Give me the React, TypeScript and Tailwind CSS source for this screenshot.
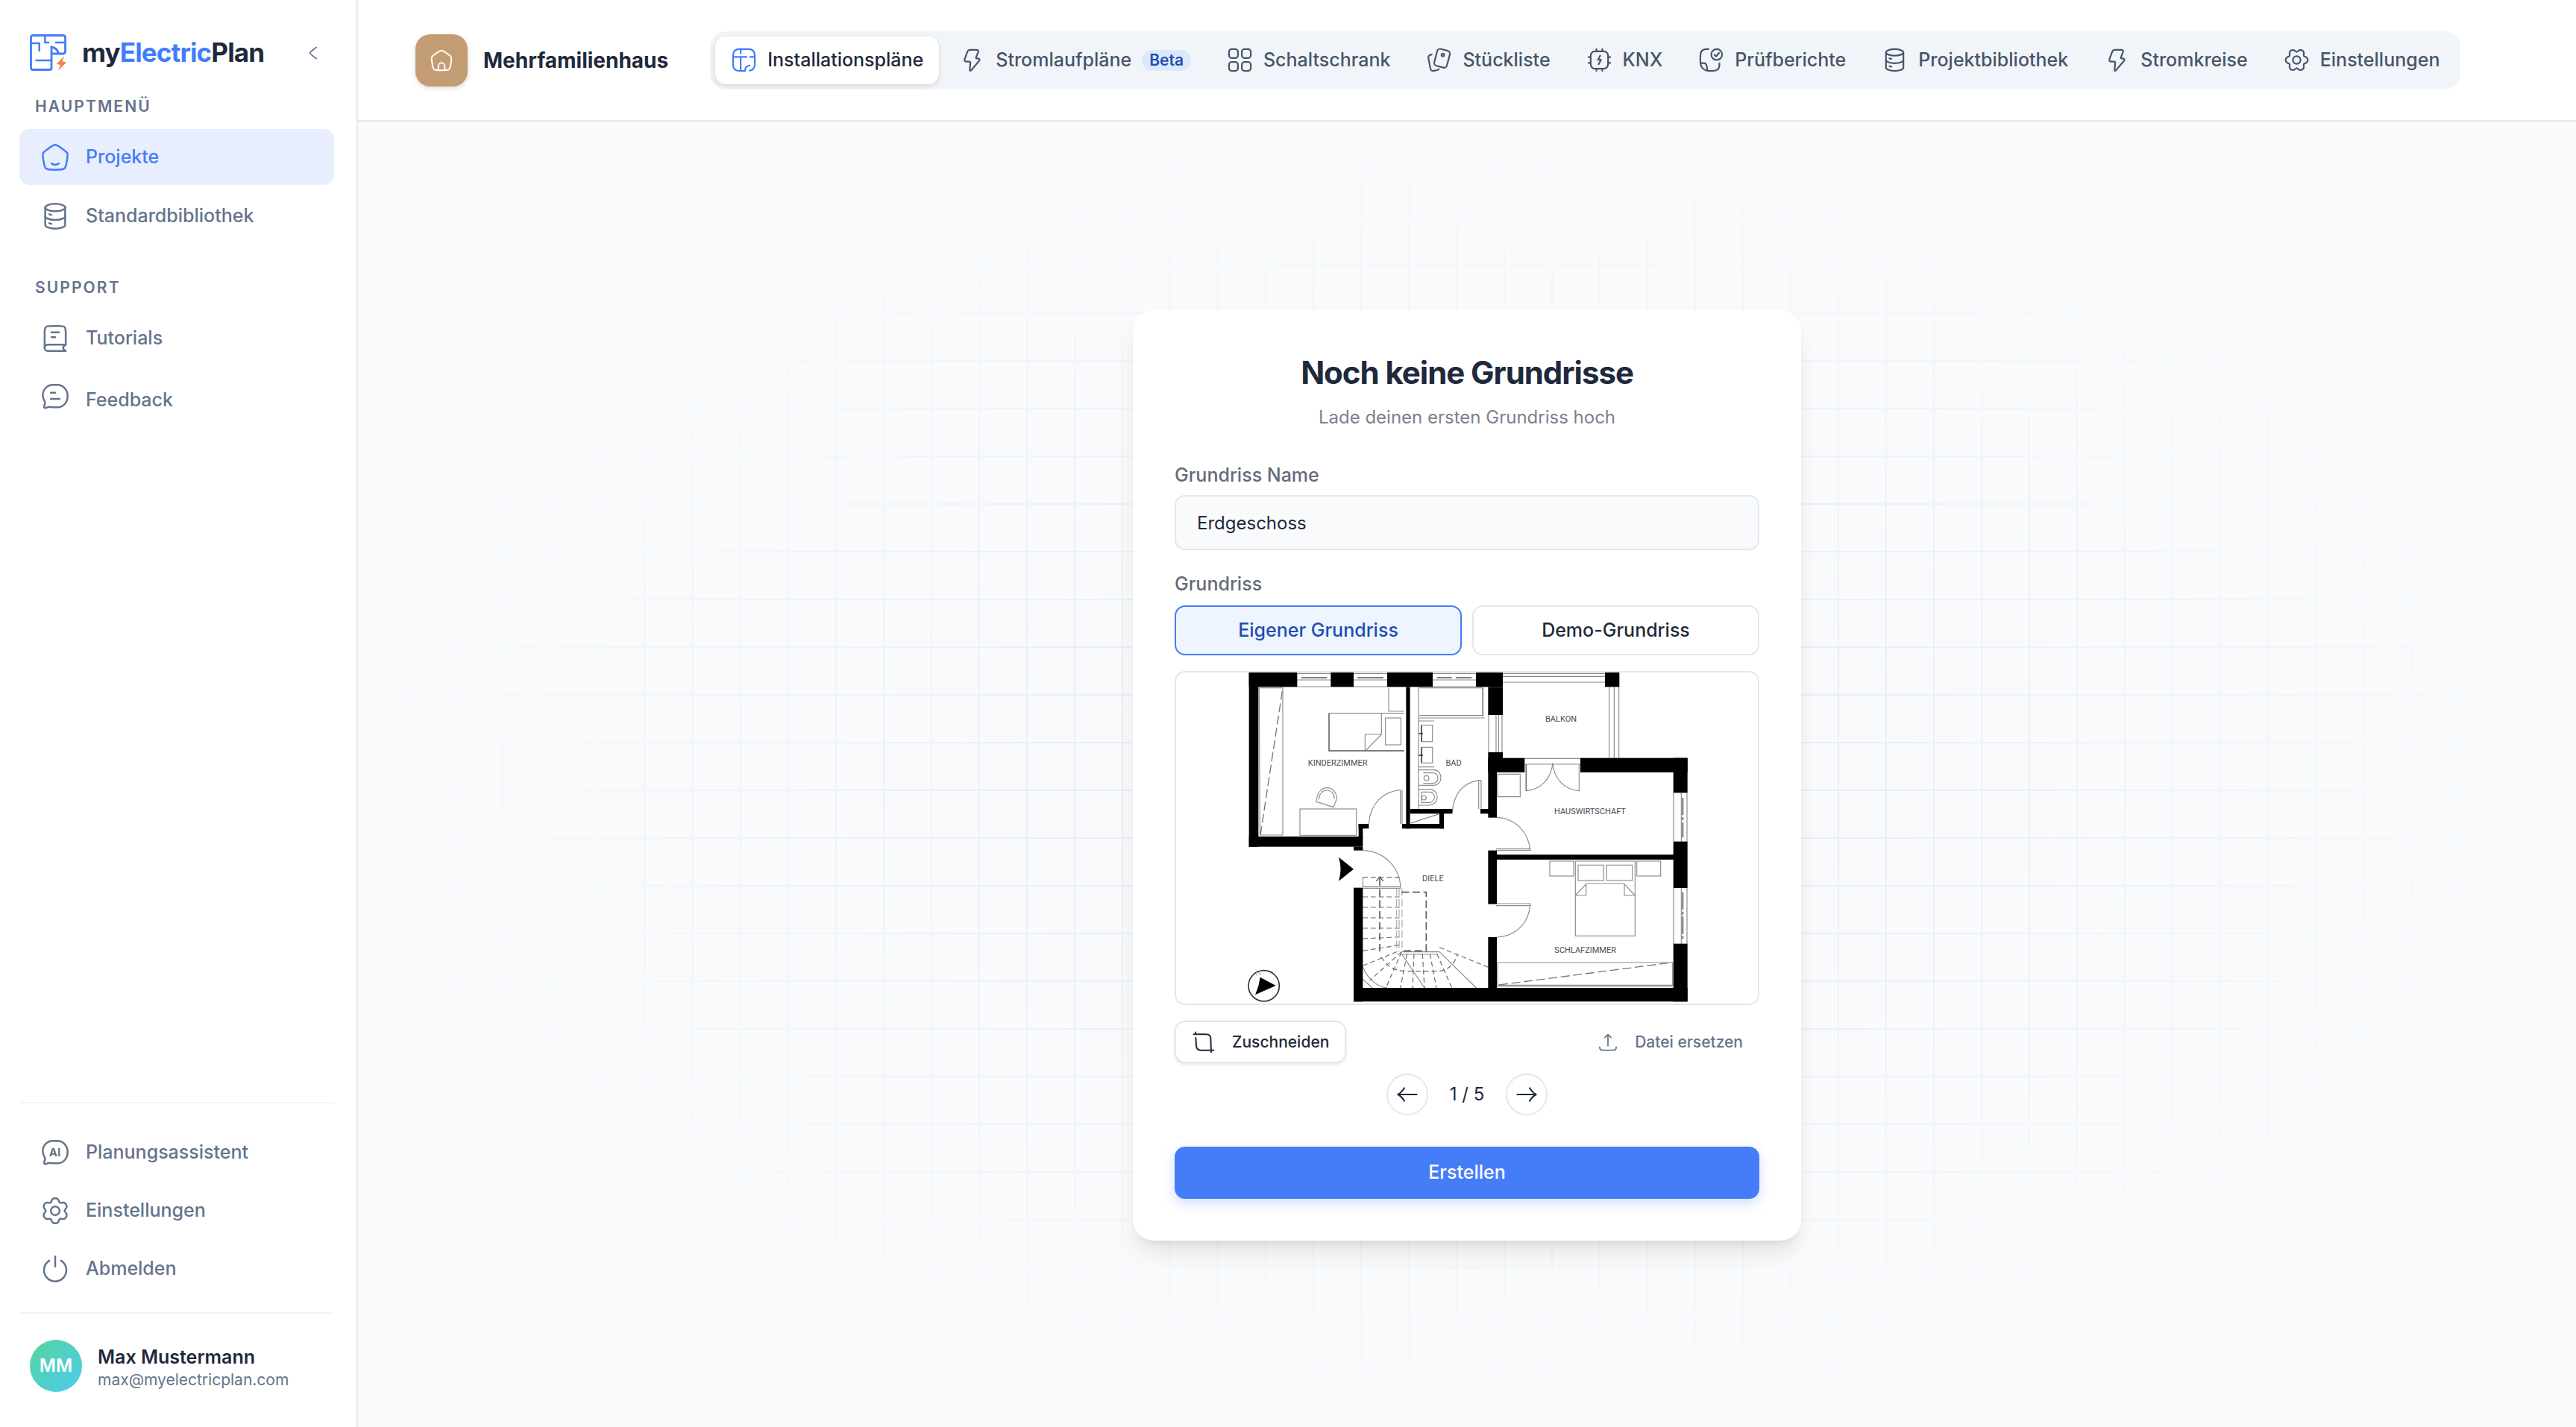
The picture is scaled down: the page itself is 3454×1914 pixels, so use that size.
import type { ReactNode } from 'react';
import { useState } from 'react';

type IconProps = { className?: string; children?: ReactNode; strokeWidth?: number };

function Icon({ className = '', children, strokeWidth = 1.5 }: IconProps) {
  return (
    <svg
      viewBox="0 0 24 24"
      fill="none"
      stroke="currentColor"
      strokeWidth={strokeWidth}
      strokeLinecap="round"
      strokeLinejoin="round"
      aria-hidden="true"
      className={`shrink-0 ${className}`}
    >
      {children}
    </svg>
  );
}

const HOME_OUTLINE =
  'M2.35 13.21C2 10.92 1.82 9.77 2.26 8.75C2.69 7.73 3.65 7.03 5.58 5.64L7.02 4.6C9.42 2.87 10.62 2 12 2C13.38 2 14.58 2.87 16.98 4.6L18.42 5.64C20.35 7.03 21.31 7.73 21.74 8.75C22.18 9.77 22 10.92 21.65 13.21L21.35 15.17C20.85 18.43 20.6 20.06 19.43 21.03C18.26 22 16.55 22 13.14 22H10.86C7.45 22 5.74 22 4.57 21.03C3.4 20.06 3.15 18.43 2.65 15.17L2.35 13.21Z';

const BUBBLE =
  'M14 2.5h-4C5.6 2.5 2 6.2 2 11c0 2.1.8 3.5 1.6 4.9.6 1.1.1 2.3-.4 3.6-.4 1-.1 1.7.9 1.6 1.3-.1 2-.9 3-.9.7 0 1.3.4 2.9.4h4c4.4 0 8-3.9 8-9S18.4 2.5 14 2.5z';

/** Six-lobed gear outline around the centre of a 24-unit box. */
function gearPath(phase: number): string {
  const points: string[] = [];
  for (let i = 0; i < 180; i += 1) {
    const a = (i / 180) * Math.PI * 2;
    const dip = Math.pow((1 - Math.cos(6 * (a - phase))) / 2, 1.6);
    const r = 10.1 - 2.5 * dip;
    points.push(`${(12 + r * Math.cos(a)).toFixed(2)} ${(12 + r * Math.sin(a)).toFixed(2)}`);
  }
  return `M${points.join('L')}Z`;
}

const GEAR_UPRIGHT = gearPath(Math.PI / 2);
const GEAR_SIDE = gearPath(0);

const icons = {
  home: (
    <>
      <path d={HOME_OUTLINE} />
      <path d="M15 17c-.8.62-1.85 1-3 1s-2.2-.38-3-1" />
    </>
  ),
  house: (
    <>
      <path d={HOME_OUTLINE} />
      <path d="M8.8 22v-4.3a3.2 3.2 0 016.4 0V22" />
    </>
  ),
  database: (
    <>
      <ellipse cx="12" cy="5" rx="8" ry="3" />
      <path d="M4 5v14c0 1.66 3.58 3 8 3s8-1.34 8-3V5" />
      <path d="M20 12c0 1.66-3.58 3-8 3s-8-1.34-8-3" />
      <path d="M7.2 10.4c.6.25 1.2.4 1.8.5M7.2 17.6c.6.25 1.2.4 1.8.5" />
    </>
  ),
  book: (
    <>
      <path d="M20.5 17V8c0-2.83 0-4.24-.88-5.12C18.74 2 17.33 2 14.5 2h-5c-2.83 0-4.24 0-5.12.88C3.5 3.76 3.5 5.17 3.5 8v11.5" />
      <path d="M20.5 17H6a2.5 2.5 0 000 5h14.5c-1.3-.7-2.1-1.5-2.1-2.5S19.2 17.7 20.5 17z" />
      <path d="M15 7H9M12 11H9" />
    </>
  ),
  feedback: (
    <>
      <path d={BUBBLE} />
      <path d="M12 8.8H8.5M15.5 13.8h-7" />
    </>
  ),
  ai: (
    <>
      <path d={BUBBLE} />
      <text
        x="11.7"
        y="15"
        textAnchor="middle"
        fontSize="9"
        fontWeight="700"
        fontFamily="Inter, sans-serif"
        fill="currentColor"
        stroke="none"
      >
        AI
      </text>
    </>
  ),
  gear: (
    <>
      <path d={GEAR_UPRIGHT} />
      <circle cx="12" cy="12" r="3.5" />
    </>
  ),
  gearSide: (
    <>
      <path d={GEAR_SIDE} />
      <circle cx="12" cy="12" r="3.5" />
    </>
  ),
  power: (
    <>
      <path d="M7.3 5.3a9 9 0 109.4 0" />
      <path d="M12 2v8" />
    </>
  ),
  plan: (
    <>
      <path d="M13 22H8c-4 0-6-2-6-6V8c0-4 2-6 6-6h8c4 0 6 2 6 6v8c0 3-1.5 5.2-4.8 5.8" />
      <path d="M9 2v4M9 9v13M2 9.2h12.3M17.7 9.2H22" />
      <path d="M13 22c0-2.6 1.4-4.6 4.2-5" />
    </>
  ),
  bolt: (
    <path d="M10.3 2.6h5.9c1.2 0 1.8.8 1.4 1.9l-2 5.1c-.2.5.1.9.6 1h1.3c1.2.1 1.7 1.1 1 2.1l-7.4 8.8c-.6.7-1.4.4-1.3-.5l.6-6.3c0-.7-.4-1.2-1.1-1.2H6.7c-1.3 0-2-1-1.6-2.2l2.6-7.1c.4-1 1.3-1.6 2.6-1.6z" />
  ),
  grid: (
    <>
      <rect x="2" y="2" width="8.2" height="8.2" rx="2.4" />
      <rect x="13.8" y="2" width="8.2" height="8.2" rx="2.4" />
      <rect x="2" y="13.8" width="8.2" height="8.2" rx="2.4" />
      <rect x="13.8" y="13.8" width="8.2" height="8.2" rx="2.4" />
    </>
  ),
  cards: (
    <>
      <rect x="-6" y="-8" width="12" height="16" rx="2.8" transform="translate(14.8 10.4) rotate(15)" />
      <circle cx="15.5" cy="7.3" r="1.2" />
      <path d="M5.3 6.9c-2.3.4-3.4 1.2-3.1 3l1.7 9.2c.4 2.2 1.4 3.2 3.5 2.8l2.4-.5c1-.2 1.7-.6 2.1-1.1" />
    </>
  ),
  chip: (
    <>
      <rect x="4" y="4" width="16" height="16" rx="4" />
      <path d="M9.3 4V2M14.7 4V2M9.3 22v-2M14.7 22v-2M4 9.3H2M4 14.7H2M22 9.3h-2M22 14.7h-2" />
      <path d="M12.7 8l-2 3.8h2.8l-2.2 4.1" />
    </>
  ),
  report: (
    <>
      <path d="M9.5 2H8C4 2 2 4 2 8v5.5c0 5 3 8.5 8 8.5h3.5c4 0 6-1.8 6-5V15" />
      <path d="M2.2 14.8h2.6c1.7 0 2.7.8 2.9 2.2l.9 4.8" />
      <circle cx="17" cy="7" r="5" />
      <path d="M14.9 7.2l1.5 1.5 2.8-3.2" />
    </>
  ),
  crop: (
    <>
      <path d="M2 4h12.5c3 0 4.500 1.500 4.500 4.500L19.500 22" />
      <path d="M4 7.500l.5 8c.2 3 1.500 4.500 4.500 4.500h13M3.800 1.800V4" />
    </>
  ),
  upload: (
    <>
      <path d="M2.500 17.500c0 2.300 1 3.500 3.500 3.500h12c2.500 0 3.500-1.200 3.500-3.500" />
      <path d="M12 16V3M8.500 6.500L12 3l3.500 3.500" />
    </>
  ),
  arrowLeft: <path d="M2.500 12h19M9 5.500C7.500 8 5.500 10.500 2.500 12c3 1.500 5 4 6.500 6.500" />,
  arrowRight: <path d="M21.500 12h-19M15 5.500c1.500 2.500 3.500 5 6.500 6.500-3 1.500-5 4-6.500 6.500" />,
  chevronLeft: <path d="M15.500 5.500C12 8 9.500 10 8 12c1.500 2 4 4 7.500 6.500" />,
};

type IconName = keyof typeof icons;

function Logo() {
  return (
    <svg viewBox="0 0 49 49" fill="none" className="size-[49px] shrink-0" aria-hidden="true">
      <g stroke="#437cfa" strokeWidth="2.8" strokeLinecap="round" strokeLinejoin="round">
        <path d="M29 26H45a2.500 2.500 0 002.500-2.500V4a2.500 2.500 0 00-2.500-2.500H4A2.500 2.500 0 001.500 4v41A2.500 2.500 0 004 47.500h22.500a2.500 2.500 0 002.500-2.500V17" />
        <path d="M29 17c5.500 1 8.500 4.500 9.500 9" />
        <path d="M1.500 12h11.200v10M20.300 2v9H25M35 11h12.500M8.500 35H29" strokeWidth="2.5" />
      </g>
      <path d="M46 29.500L35.600 40l5.300 1L38.300 48.700 49 37.600l-5.300-1.400z" fill="#ee8352" />
    </svg>
  );
}

function NavItem({ icon, label, active = false, tall = false }: { icon: IconName; label: string; active?: boolean; tall?: boolean }) {
  return (
    <li>
      <a
        href="#"
        aria-current={active ? 'page' : undefined}
        className={`flex items-center gap-[21px] rounded-[14px] px-7 text-[25px] leading-[35px] font-medium ${
          tall ? 'h-[82px] py-[17px]' : 'h-[75px]'
        } ${active ? 'bg-[#e8eefe] text-[#437cfa]' : 'text-[#64748b]'}`}
      >
        <Icon className={`size-10 ${tall ? 'self-start' : ''}`}>{icons[icon]}</Icon>
        {label}
      </a>
    </li>
  );
}

function SectionTitle({ children }: { children: ReactNode }) {
  return (
    <h2 className="mb-4 px-[21px] text-[21px] leading-7 font-semibold tracking-widest text-[#64748b] uppercase">
      {children}
    </h2>
  );
}

function Sidebar() {
  return (
    <aside className="flex w-[480px] shrink-0 flex-col border-r-2 border-[#e2e8f0] bg-white pr-[30px] pl-[26px]">
      <div className="mt-[46px] flex items-center gap-[21px] pr-[14px] pl-[14px]">
        <Logo />
        <span className="text-[35px] leading-[49px] font-bold tracking-tight text-[#1e293b]">
          my<span className="text-[#437cfa]">Electric</span>Plan
        </span>
        <button type="button" aria-label="Seitenleiste einklappen" className="ml-auto text-[#64748b]">
          <Icon className="size-7">{icons.chevronLeft}</Icon>
        </button>
      </div>

      <nav className="mt-[34px] flex flex-1 flex-col">
        <SectionTitle>Hauptmenü</SectionTitle>
        <ul className="flex flex-col gap-1">
          <NavItem icon="home" label="Projekte" active />
          <NavItem icon="database" label="Standardbibliothek" />
        </ul>
        <div className="mt-[45px]">
          <SectionTitle>Support</SectionTitle>
          <ul className="flex flex-col gap-1">
            <NavItem icon="book" label="Tutorials" />
            <NavItem icon="feedback" label="Feedback" tall />
          </ul>
        </div>
        <ul className="mt-auto flex flex-col gap-[3px] border-t-2 border-[#f1f5f9] pt-7 pb-[21px]">
          <NavItem icon="ai" label="Planungsassistent" />
          <NavItem icon="gear" label="Einstellungen" />
          <NavItem icon="power" label="Abmelden" />
        </ul>
      </nav>

      <div className="flex items-center gap-[21px] border-t-2 border-[#f1f5f9] pt-[35px] pb-[47px] pl-[14px]">
        <span className="flex size-[70px] items-center justify-center rounded-full bg-linear-to-br from-[#56d39a] to-[#4cccf0] text-[24px] font-semibold text-white">
          MM
        </span>
        <div className="pt-1">
          <p className="text-[25px] leading-[33px] font-semibold text-[#1e293b]">Max Mustermann</p>
          <p className="text-[21px] leading-7 text-[#64748b]">max@myelectricplan.com</p>
        </div>
      </div>
    </aside>
  );
}

const tabs: { icon: IconName; label: string; badge?: string }[] = [
  { icon: 'plan', label: 'Installationspläne' },
  { icon: 'bolt', label: 'Stromlaufpläne', badge: 'Beta' },
  { icon: 'grid', label: 'Schaltschrank' },
  { icon: 'cards', label: 'Stückliste' },
  { icon: 'chip', label: 'KNX' },
  { icon: 'report', label: 'Prüfberichte' },
  { icon: 'database', label: 'Projektbibliothek' },
  { icon: 'bolt', label: 'Stromkreise' },
  { icon: 'gearSide', label: 'Einstellungen' },
];

function Header() {
  return (
    <header className="flex h-[163px] shrink-0 items-center border-b-2 border-[#e2e8f0] bg-white pl-[77px]">
      <span className="flex size-[70px] shrink-0 items-center justify-center rounded-[20px] bg-[#c49c73] text-white shadow-[0_2px_6px_rgba(0,0,0,0.15)]">
        <Icon className="size-8">{icons.house}</Icon>
      </span>
      <h1 className="ml-[21px] text-[28px] leading-[42px] font-bold text-[#1e293b]">Mehrfamilienhaus</h1>
      <nav className="ml-14 flex items-center gap-[6px] rounded-[21px] bg-[#f1f5fa] p-[7px]">
        {tabs.map((tab, i) => (
          <a
            key={tab.label}
            href="#"
            aria-current={i === 0 ? 'page' : undefined}
            className={`flex h-16 items-center gap-[14px] rounded-[14px] px-[21px] text-[25px] font-medium whitespace-nowrap ${
              i === 0 ? 'bg-white text-[#1e293b] shadow-[0_2px_6px_rgba(0,0,0,0.14)]' : 'text-[#475569]'
            }`}
          >
            <Icon className={`size-[35px] ${i === 0 ? 'text-[#437cfa]' : ''}`}>{icons[tab.icon]}</Icon>
            {tab.label}
            {tab.badge && (
              <span className="rounded-full bg-[#dce9fd] px-[10px] text-[21px] leading-7 font-semibold text-[#1f4db5]">
                {tab.badge}
              </span>
            )}
          </a>
        ))}
      </nav>
    </header>
  );
}

/** Solid walls as [x, y, width, height]. */
const walls: [number, number, number, number][] = [
  [104, 36, 194, 58],
  [433, 36, 92, 58],
  [660, 36, 183, 58],
  [1017, 36, 108, 58],
  [1066, 94, 59, 113],
  [104, 36, 38, 701],
  [104, 696, 458, 41],
  [525, 737, 37, 15],
  [545, 645, 17, 60],
  [545, 645, 41, 19],
  [736, 94, 16, 570],
  [720, 645, 168, 19],
  [870, 585, 18, 79],
  [752, 585, 170, 19],
  [1035, 585, 40, 19],
  [1066, 357, 59, 81],
  [1066, 438, 35, 182],
  [1066, 380, 147, 58],
  [1437, 380, 431, 58],
  [1811, 380, 57, 140],
  [1811, 716, 57, 187],
  [1811, 1127, 57, 233],
  [1536, 36, 58, 58],
  [1095, 769, 720, 20],
  [1066, 752, 35, 216],
  [1066, 1101, 35, 210],
  [525, 1305, 1343, 55],
  [525, 902, 37, 458],
];

const rooms: [string, number, number][] = [
  ['KINDERZIMMER', 461, 411],
  ['BAD', 927, 411],
  ['BALKON', 1359, 234],
  ['HAUSWIRTSCHAFT', 1476, 606],
  ['DIELE', 844, 875],
  ['SCHLAFZIMMER', 1457, 1164],
];

function FloorPlan() {
  return (
    <svg viewBox="-189 36 2340 1332" className="block h-full w-full" fill="none" role="img" aria-label="Grundriss Vorschau">
      <g stroke="#8c8c8c" strokeWidth="3.5">
        {/* Windows of the upper wall */}
        <path d="M298 40H433M298 66H433M298 93H433M525 40H660M525 66H660M525 93H660M843 40H1017M843 66H1017M843 93H1017" />
        <path d="M315 57H418M541 57H645M860 57H920M936 57H1000" stroke="#555" strokeWidth="5" />
        <path d="M1125 40H1536M1125 52H1536M1125 75H1536" />
        {/* Side windows */}
        <path d="M1068 207V357M1098 207V357M1108 207V357M1122 207V357" />
        <path d="M1553 94V380M1573 94V380M1592 94V380" />
        <path d="M1812 520V716M1843 520V716M1866 520V716M1812 903V1127M1843 903V1127M1866 903V1127" />
        <path d="M1849 540V700M1849 920V1110" stroke="#777" strokeWidth="6" strokeDasharray="70 8 12 8" />
        {/* Balcony door */}
        <path d="M1213 382H1437M1213 405H1437" />
        <path d="M1219 405V512C1275 508 1320 465 1326 400M1432 405V512C1375 508 1330 465 1326 400" />
        {/* Children's room */}
        <path d="M145 98H240V690H148z" />
        <path d="M666 98V192H728M426 200H728M426 200V351H728M637 200V285M637 285L573 351M571 351V285H637" />
        <rect x="653" y="219" width="62" height="108" />
        <rect x="309" y="585" width="227" height="106" />
        <path d="M374 556C378 520 395 500 418 500S458 520 457 545L444 578zM384 548C388 522 400 510 418 510S448 526 447 545" />
        <path d="M713 508V645M720 508V645M713 508C640 516 592 565 586 645" />
        {/* Bathroom */}
        <path d="M786 94V585M790 98H1045V212M790 209H1045M786 219H1052M786 231H849" />
        <rect x="798" y="248" width="44" height="66" />
        <rect x="798" y="337" width="44" height="63" />
        <path d="M786 416H849M786 428H849C885 430 885 488 849 490H786M805 440H846C870 444 870 478 846 482H805M786 506H830C872 508 872 566 830 570H786M798 517H832C856 520 856 556 832 559H798z" />
        <circle cx="818" cy="461" r="10" />
        <circle cx="808" cy="540" r="9" />
        <path d="M1028 470V585M1038 470V585M1038 470H1028C965 480 926 525 922 600" />
        {/* Utility room */}
        <path d="M1104 445H1195V536H1104z" />
        <path d="M1101 619C1175 622 1230 680 1235 752M1098 746H1238M1098 752H1238" />
        {/* Bedroom */}
        <path d="M1098 966H1238M1098 974H1238M1235 968C1232 1040 1180 1098 1101 1101" />
        <rect x="1314" y="795" width="96" height="60" />
        <rect x="1664" y="795" width="96" height="60" />
        <rect x="1417" y="795" width="240" height="301" />
        <rect x="1428" y="811" width="103" height="62" />
        <rect x="1543" y="811" width="103" height="62" />
        <path d="M1417 933L1462 885H1612L1657 933M1417 933H1460V890M1657 933H1614V890" />
        <path d="M1104 1203H1808V1294H1104zM1101 1299H1811" />
        {/* Entrance */}
        <path d="M562 752C650 756 712 820 714 905M562 898H714M562 904H714M562 860V900M562 1220C580 1265 615 1300 660 1305M562 1270L600 1305" />
        {/* Stair flight */}
        <path d="M718 1160H870M718 1168L810 1305M870 1160L1018 1305M718 1170H860" />
      </g>
      <g stroke="#6d6d6d" strokeWidth="3.5" strokeDasharray="20 12">
        <path d="M562 860H714M562 939H714M562 981H714M562 1023H714M562 1065H714M562 1107L714 1100M562 1156L714 1132M562 1216L708 1156" />
        <path d="M718 1160L590 1275M718 1160L655 1305M740 1168L713 1305M768 1168L762 1305M802 1168L810 1305M832 1168L858 1305M860 1168L920 1305M870 1142L1066 1222" />
        <path d="M636 1180C660 1220 690 1238 740 1238H870C910 1232 935 1205 942 1168" />
      </g>
      <path d="M150 690L240 98M1110 1293L1805 1203" stroke="#777" strokeWidth="4" strokeDasharray="36 14" />
      <path d="M698 905V1160M708 905V1160M720 905V1160" stroke="#b5b5b5" strokeWidth="4" strokeDasharray="30 12" />
      <path d="M630 1158V862M718 920H817V1156H718" stroke="#5c5c5c" strokeWidth="5" strokeDasharray="30 14" />
      <path d="M616 876L630 858L644 876" stroke="#5c5c5c" strokeWidth="4" />
      <path d="M786 282H804M798 270V294M786 369H804M798 337V400M798 248V314" stroke="#333" strokeWidth="4" />
      <path d="M426 200V351H728M1045 98V212M1219 405V512" stroke="#666" strokeWidth="4" />
      <g fill="#000">
        {walls.map(([x, y, w, h], i) => (
          <rect key={i} x={x} y={y} width={w} height={h} />
        ))}
        <path d="M465 779L525 827L465 875Q480 827 465 779z" />
        <path d="M149 1262L212 1296L129 1333L142 1298z" />
      </g>
      <rect x="755" y="606" width="113" height="36" fill="#fff" />
      <path d="M756 642L866 606" stroke="#666" strokeWidth="3" />
      <circle cx="164" cy="1297" r="62" stroke="#333" strokeWidth="5" />
      <path d="M134 1256V1236L150 1252V1232" stroke="#aaa" strokeWidth="3" />
      <g fill="#4a4a4a" fontFamily="Roboto, sans-serif" fontSize="33" textAnchor="middle">
        {rooms.map(([name, x, y]) => (
          <text key={name} x={x} y={y}>
            {name}
          </text>
        ))}
      </g>
    </svg>
  );
}

function CreateCard() {
  const [name, setName] = useState('Erdgeschoss');
  return (
    <form
      className="relative w-full max-w-[896px] rounded-[28px] bg-white p-14 shadow-[0_20px_30px_-6px_rgba(0,0,0,0.1),0_8px_12px_-8px_rgba(0,0,0,0.1)]"
      onSubmit={(e) => e.preventDefault()}
    >
      <h2 className="text-center text-[42px] leading-[56px] font-bold tracking-tight text-[#1e293b]">Noch keine Grundrisse</h2>
      <p className="mt-[14px] text-center text-[24px] leading-[35px] text-[#7b8190]">Lade deinen ersten Grundriss hoch</p>

      <label htmlFor="plan-name" className="mt-[43px] block text-[25px] leading-[35px] font-medium text-[#636b7a]">
        Grundriss Name
      </label>
      <input
        id="plan-name"
        type="text"
        value={name}
        onChange={(e) => setName(e.target.value)}
        className="mt-[9px] block h-[74px] w-full rounded-[14px] border-2 border-[#e2e8f0] bg-[#f8fafc] px-7 text-[24px] text-[#1e293b] outline-none"
      />

      <p id="plan-source" className="mt-7 text-[25px] leading-[35px] font-medium text-[#636b7a]">
        Grundriss
      </p>
      <div role="group" aria-labelledby="plan-source" className="mt-[11px] grid grid-cols-2 gap-[14px] text-[25px] font-medium">
        <button type="button" aria-pressed="true" className="h-[67px] rounded-[14px] border-2 border-[#437cfa] bg-[#eff5fe] text-[#1f4db5]">
          Eigener Grundriss
        </button>
        <button type="button" aria-pressed="false" className="h-[67px] rounded-[14px] border-2 border-[#e2e8f0] bg-white text-[#1e293b]">
          Demo-Grundriss
        </button>
      </div>

      <div className="mt-[21px] h-[448px] overflow-hidden rounded-[14px] border-2 border-[#e2e8f0] bg-white">
        <FloorPlan />
      </div>

      <div className="mt-[21px] flex items-center justify-between text-[21px] font-medium">
        <button
          type="button"
          className="flex h-[57px] items-center gap-[22px] rounded-[14px] border-2 border-[#e2e8f0] bg-white px-[21px] text-[#1e293b] shadow-[0_2px_4px_rgba(0,0,0,0.1)]"
        >
          <Icon className="size-8">{icons.crop}</Icon>
          Zuschneiden
        </button>
        <button type="button" className="flex h-[57px] items-center gap-[22px] px-[22px] text-[#64748b]">
          <Icon className="size-7">{icons.upload}</Icon>
          Datei ersetzen
        </button>
      </div>

      <div className="mt-[14px] flex items-center justify-center gap-[29px] text-[#1e293b]">
        <button type="button" aria-label="Vorherige Seite" className="flex size-14 items-center justify-center rounded-full border-2 border-[#e2e8f0]">
          <Icon className="size-8">{icons.arrowLeft}</Icon>
        </button>
        <span className="text-[24px]">1 / 5</span>
        <button type="button" aria-label="Nächste Seite" className="flex size-14 items-center justify-center rounded-full border-2 border-[#e2e8f0]">
          <Icon className="size-8">{icons.arrowRight}</Icon>
        </button>
      </div>

      <button
        type="submit"
        className="mt-[42px] h-[70px] w-full rounded-[14px] bg-[#457df9] text-[25px] font-medium text-white shadow-[0_6px_16px_rgba(69,125,249,0.25)]"
      >
        Erstellen
      </button>
    </form>
  );
}

export default function App() {
  return (
    <div className="flex min-h-screen bg-white font-['Inter',sans-serif]">
      <Sidebar />
      <div className="flex min-w-0 flex-1 flex-col">
        <Header />
        <main className="relative flex flex-1 items-center justify-center bg-[#f8fafc] pt-[3px]">
          <div className="absolute inset-0 bg-[linear-gradient(to_right,#e2e8f0_2px,transparent_2px),linear-gradient(to_bottom,#e2e8f0_2px,transparent_2px)] mask-[radial-gradient(ellipse_at_center,black_0%,transparent_70%)] bg-size-[64px_64px]" />
          <CreateCard />
        </main>
      </div>
    </div>
  );
}
